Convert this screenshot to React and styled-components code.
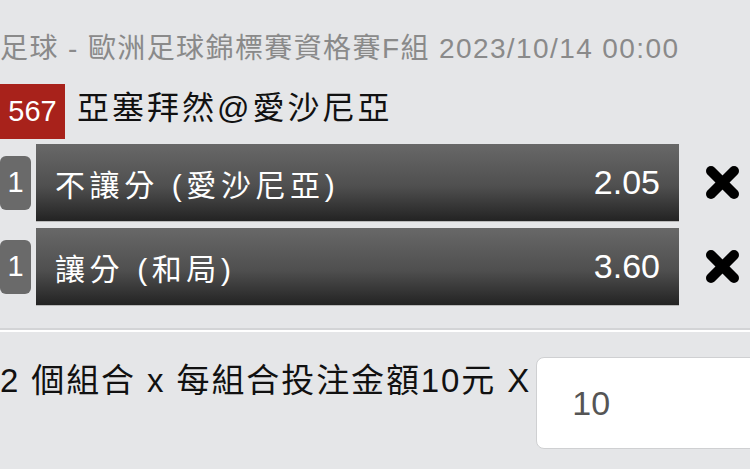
import styled, { createGlobalStyle } from "styled-components";

const GlobalStyle = createGlobalStyle`
    html, body {
        margin: 0;
        padding: 0;
        background: #e5e6e8;
        overflow: hidden;
    }
    body {
        font-family: "Liberation Sans", "Noto Sans CJK TC", sans-serif;
    }
`

const bets = [
    { num: 1, label: "不讓分 (愛沙尼亞)", odds: "2.05" },
    { num: 1, label: "讓分 (和局)", odds: "3.60" },
];

const CloseIcon = () => (
    <svg width="35" height="35" viewBox="0 0 35 35">
        <g stroke="#000" strokeWidth="10" strokeLinecap="round">
            <line x1="6" y1="6" x2="29" y2="29" />
            <line x1="29" y1="6" x2="6" y2="29" />
        </g>
    </svg>
);

const App = () => {
    return(
        <Page>
            <GlobalStyle />
            <Header>足球 - 歐洲足球錦標賽資格賽F組 2023/10/14 00:00</Header>
            <MatchRow>
                <Badge>567</Badge>
                <Title>亞塞拜然@愛沙尼亞</Title>
            </MatchRow>
            <BetList>
                {bets.map((bet, index) => (
                    <BetRow key={index}>
                        <Tag>{bet.num}</Tag>
                        <Bar>
                            <Label>{bet.label}</Label>
                            <Odds>{bet.odds}</Odds>
                        </Bar>
                        <Remove><CloseIcon /></Remove>
                    </BetRow>
                ))}
            </BetList>
            <Divider />
            <Stake>
                <StakeText>2 個組合 x 每組合投注金額10元 X</StakeText>
                <AmountBox>10</AmountBox>
            </Stake>
        </Page>
    );
};

export default App;

const Page = styled.div`
    display: flex;
    flex-direction: column;
    width: 750px;
    height: 469px;
    padding-top: 29px;
    box-sizing: border-box;
`
const Header = styled.div`
    color: #8a8a8a;
    font-size: 28px;
    letter-spacing: 1.4px;
    line-height: 40px;
    white-space: nowrap;
`
const MatchRow = styled.div`
    display: flex;
    align-items: flex-start;
    gap: 12px;
    margin-top: 15px;
`
const Badge = styled.div`
    display: flex;
    align-items: center;
    justify-content: center;
    width: 65px;
    height: 55px;
    background: #a8221b;
    color: #fff;
    font-size: 29px;
`
const Title = styled.div`
    color: #111;
    font-size: 32px;
    letter-spacing: 3px;
    line-height: 48px;
    white-space: nowrap;
`
const BetList = styled.div`
    display: flex;
    flex-direction: column;
    gap: 7px;
    margin-top: 5px;
`
const BetRow = styled.div`
    display: flex;
    align-items: center;
    height: 77px;
`
const Tag = styled.div`
    display: flex;
    align-items: center;
    justify-content: center;
    width: 31px;
    height: 54px;
    border-radius: 6px;
    background: #6a6a6a;
    color: #fff;
    font-size: 29px;
`
const Bar = styled.div`
    display: flex;
    align-items: center;
    justify-content: space-between;
    width: 643px;
    height: 77px;
    margin-left: 5px;
    padding: 0 19px 0 19px;
    box-sizing: border-box;
    background: linear-gradient(#686868, #4f4f4f 55%, #232323);
    box-shadow: 0 1px 0 #b8b8b8;
    color: #fff;
`
const Label = styled.div`
    font-size: 30px;
    letter-spacing: 4.6px;
    white-space: nowrap;
`
const Odds = styled.div`
    font-size: 34px;
`
const Remove = styled.div`
    display: flex;
    margin-left: 26px;
`
const Divider = styled.div`
    height: 0;
    margin-top: 23px;
    border-top: 2px solid #d3d4d6;
    border-bottom: 2px solid #fff;
`
const Stake = styled.div`
    display: flex;
    align-items: flex-start;
    gap: 5px;
    margin-top: 25px;
`
const StakeText = styled.div`
    color: #111;
    font-size: 33px;
    letter-spacing: 1.9px;
    line-height: 48px;
    white-space: nowrap;
`
const AmountBox = styled.div`
    display: flex;
    align-items: center;
    flex-shrink: 0;
    width: 240px;
    height: 92px;
    padding-left: 35px;
    box-sizing: border-box;
    background: #fff;
    border: 1px solid #cfd0d2;
    border-radius: 8px;
    color: #555;
    font-size: 34px;
`
